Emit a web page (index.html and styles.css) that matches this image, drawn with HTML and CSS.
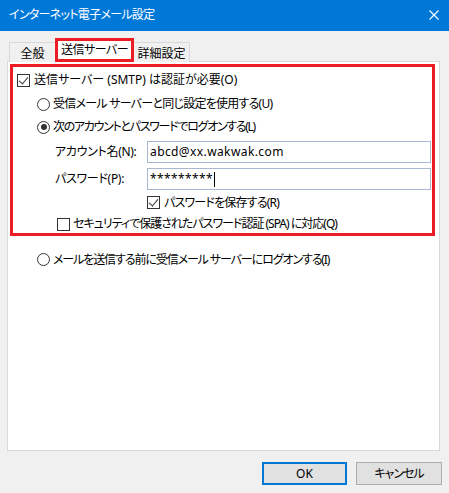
FILE: index.html
```html
<!DOCTYPE html>
<html>
    <head>
        <title>インターネット電子メール設定</title>
        <link rel="stylesheet" href="styles.css">
    </head>
    <body>
        <div class="window">
            <div class="titlebar">
                <span class="title">インターネット電子メール設定</span>
                <svg class="close" width="10" height="10" viewBox="0 0 10 10">
                    <path d="M0.5 0.5 L9.5 9.5 M9.5 0.5 L0.5 9.5" stroke="#fff" stroke-width="1.1" fill="none"/>
                </svg>
            </div>
            <div class="content">
                <div class="tabs">
                    <div class="tab">全般</div>
                    <div class="tab active">送信サーバー</div>
                    <div class="tab">詳細設定</div>
                </div>
                <div class="panel">
                    <div class="highlight">
                        <div class="row r1">
                            <span class="check on"></span>
                            <span>送信サーバー (SMTP) は認証が必要(O)</span>
                        </div>
                        <div class="row r2">
                            <span class="radio"></span>
                            <span>受信メール サーバーと同じ設定を使用する(U)</span>
                        </div>
                        <div class="row r3">
                            <span class="radio on"></span>
                            <span>次のアカウントとパスワードでログオンする(L)</span>
                        </div>
                        <div class="field account">
                            <span class="field-label">アカウント名(N):</span>
                            <div class="textbox">abcd@xx.wakwak.com</div>
                        </div>
                        <div class="field password">
                            <span class="field-label">パスワード(P):</span>
                            <div class="textbox">*********<span class="caret"></span></div>
                        </div>
                        <div class="row save">
                            <span class="check on"></span>
                            <span>パスワードを保存する(R)</span>
                        </div>
                        <div class="row spa">
                            <span class="check"></span>
                            <span>セキュリティで保護されたパスワード認証 (SPA) に対応(Q)</span>
                        </div>
                    </div>
                    <div class="row before">
                        <span class="radio"></span>
                        <span>メールを送信する前に受信メール サーバーにログオンする(I)</span>
                    </div>
                </div>
                <div class="buttons">
                    <div class="button default">OK</div>
                    <div class="button cancel">キャンセル</div>
                </div>
            </div>
        </div>
    </body>
</html>
```

FILE: styles.css
```css
body {
    margin: 0;
    background: #f0f0f0;
    font-family: "Noto Sans", "Noto Sans CJK JP", sans-serif;
    font-size: 12px;
    line-height: 16px;
    color: #000;
    font-feature-settings: "palt";
}

.window {
    width: 449px;
    height: 493px;
    display: flex;
    flex-direction: column;
}

.titlebar {
    height: 30px;
    background: #0078d7;
    color: #fff;
    display: flex;
    align-items: center;
    justify-content: space-between;
    padding: 0 10px 1px 9px;
}

.title {
    letter-spacing: -0.7px;
}

.close {
    margin-top: -1px;
}

.content {
    padding: 7px 7px 0 7px;
    display: flex;
    flex-direction: column;
}

/* tabs */
.tabs {
    display: flex;
    align-items: flex-end;
    margin-left: 2px;
    margin-bottom: -1px;
    position: relative;
    z-index: 1;
}

.tab {
    height: 20px;
    box-sizing: border-box;
    border: 1px solid #d9d9d9;
    border-bottom: none;
    background: #f0f0f0;
    display: flex;
    align-items: center;
    justify-content: center;
}

.tab:first-child {
    width: 46px;
    border-right: none;
    padding-top: 2px;
}

.tab:last-child {
    width: 56px;
    border-left: none;
    padding-top: 2px;
}

.tab.active {
    width: 79px;
    height: 24px;
    background: #fff;
    border: 3px solid #ed1c24;
    padding-bottom: 1px;
    letter-spacing: -0.5px;
}

.panel {
    width: 433px;
    height: 390px;
    box-sizing: border-box;
    background: #fff;
    border: 1px solid #d9d9d9;
}

.highlight {
    width: 425px;
    height: 172px;
    box-sizing: border-box;
    margin: 2px 0 0 2px;
    border: 3px solid #ed1c24;
}

/* rows */
.row {
    display: flex;
    align-items: center;
    gap: 4px;
    white-space: nowrap;
    letter-spacing: -0.8px;
}

.r1 { height: 26px; padding-left: 4px; letter-spacing: 0; }
.r2 { height: 22px; padding-left: 24px; gap: 3px; letter-spacing: -0.75px; }
.r3 { height: 24px; padding-left: 24px; gap: 3px; letter-spacing: -1.3px; }
.save { height: 25px; padding-left: 134px; }
.spa { height: 18px; padding-left: 44px; gap: 3px; letter-spacing: -1px; }
.before { height: 25px; margin-top: 11px; padding-left: 29px; gap: 3px; letter-spacing: -1.1px; }

.field {
    display: flex;
    align-items: center;
    height: 22px;
}

.account { margin-top: 2px; }
.password { margin-top: 5px; }

.field-label {
    width: 92px;
    padding-left: 42px;
    letter-spacing: -0.3px;
}

.textbox {
    width: 284px;
    height: 22px;
    box-sizing: border-box;
    border: 1px solid #a9b8d2;
    padding: 0 2px;
    display: flex;
    align-items: center;
    letter-spacing: 0.4px;
}

.caret {
    display: inline-block;
    width: 1px;
    height: 15px;
    background: #000;
    margin-left: 1px;
}

/* check boxes and radios */
.check {
    width: 13px;
    height: 13px;
    box-sizing: border-box;
    border: 1px solid #333;
    background: #fff;
    flex: none;
    position: relative;
}

.check.on::after {
    content: "";
    position: absolute;
    left: 3px;
    top: 0px;
    width: 4px;
    height: 8px;
    border: solid #333;
    border-width: 0 1px 1px 0;
    transform: rotate(40deg);
}

.radio {
    width: 13px;
    height: 13px;
    box-sizing: border-box;
    border: 1px solid #333;
    border-radius: 50%;
    background: #fff;
    flex: none;
    position: relative;
}

.radio.on::after {
    content: "";
    position: absolute;
    left: 2.5px;
    top: 2.5px;
    width: 6px;
    height: 6px;
    border-radius: 50%;
    background: #333;
}

/* buttons */
.buttons {
    display: flex;
    justify-content: flex-end;
    gap: 9px;
    margin-top: 11px;
}

.button {
    width: 86px;
    height: 23px;
    box-sizing: border-box;
    background: #e1e1e1;
    border: 1px solid #adadad;
    display: flex;
    align-items: center;
    justify-content: center;
}

.button.default {
    width: 85px;
    border: 2px solid #0078d7;
}

.button.cancel {
    letter-spacing: -1px;
}
```
